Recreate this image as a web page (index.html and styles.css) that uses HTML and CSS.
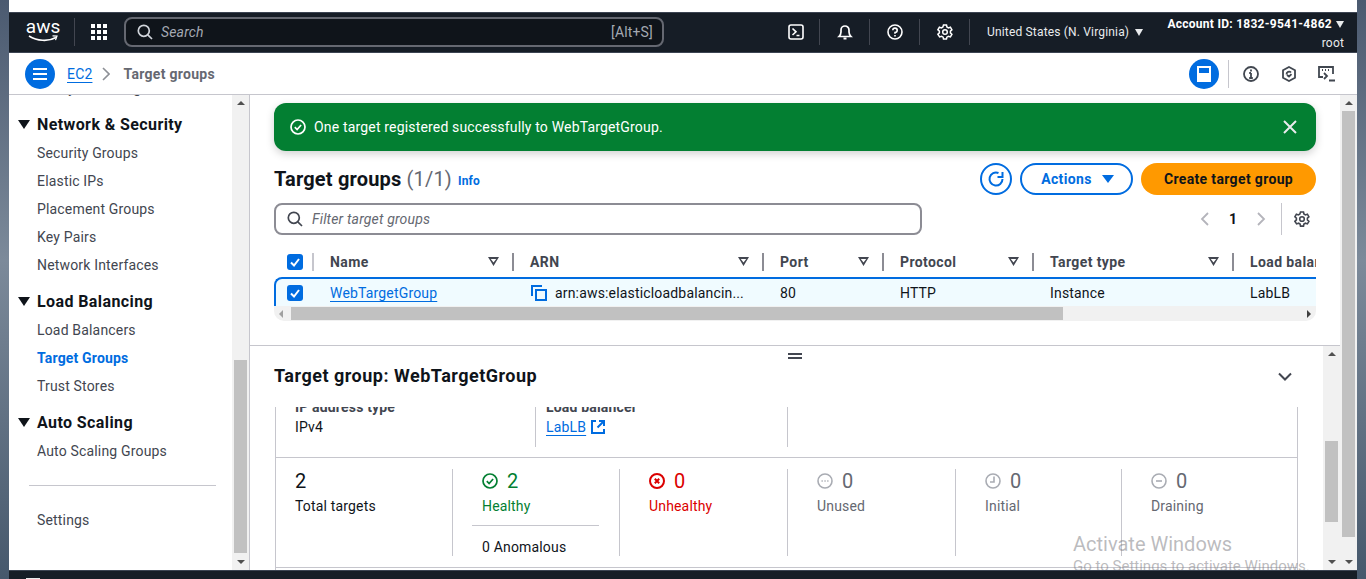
FILE: index.html
```html
<!DOCTYPE html>
<html lang="en">
<head>
    <meta charset="UTF-8">
    <meta name="viewport" content="width=device-width, initial-scale=1.0">
    <title>Target groups | EC2</title>
    <link rel="stylesheet" href="styles.css">
</head>
<body>
<div class="window">
    <div class="top-gap"></div>

    <header class="topnav">
        <div class="aws-logo">
            <span class="aws-word">aws</span>
            <svg class="aws-smile" width="30" height="7" viewBox="0 0 30 7"><path d="M1 1c8 5 19 6 27 1.500" fill="none" stroke="#fff" stroke-width="1.600"/><path d="M24.500 .8l4.500 .3-1.500 4" fill="none" stroke="#fff" stroke-width="1.200"/></svg>
        </div>
        <span class="nav-sep first"></span>
        <svg class="grid-icon" width="16" height="16" viewBox="0 0 16 16" fill="#fff">
            <rect width="4" height="4"/><rect x="6" width="4" height="4"/><rect x="12" width="4" height="4"/>
            <rect y="6" width="4" height="4"/><rect x="6" y="6" width="4" height="4"/><rect x="12" y="6" width="4" height="4"/>
            <rect y="12" width="4" height="4"/><rect x="6" y="12" width="4" height="4"/><rect x="12" y="12" width="4" height="4"/>
        </svg>
        <div class="search">
            <svg width="16" height="16" viewBox="0 0 16 16" fill="none" stroke="#d1d5db" stroke-width="1.700"><circle cx="6.800" cy="6.800" r="5.500"/><path d="M10.800 10.800L15 15"/></svg>
            <span class="search-text">Search</span>
            <span class="search-key">[Alt+S]</span>
        </div>
        <div class="nav-tool first-tool">
            <svg width="16" height="16" viewBox="0 0 16 16" fill="none" stroke="#fff" stroke-width="1.600"><rect x="1" y="1" width="14" height="14" rx="2"/><path d="M4.500 4.500L8 7.800 4.500 11M8.500 11.500h3"/></svg>
        </div>
        <span class="nav-sep"></span>
        <div class="nav-tool">
            <svg width="16" height="16" viewBox="0 0 16 16" fill="none" stroke="#fff" stroke-width="1.700"><path d="M2 12.500h12c-1.500-1.500-2-2.500-2-4.500V6a4 4 0 0 0-8 0v2c0 2-.5 3-2 4.500z"/><path d="M6.500 14.500h3" stroke-width="2"/></svg>
        </div>
        <span class="nav-sep"></span>
        <div class="nav-tool">
            <svg width="16" height="16" viewBox="0 0 16 16" fill="none" stroke="#fff" stroke-width="1.600"><circle cx="8" cy="8" r="7"/><path d="M5.800 6.200A2.200 2.200 0 1 1 8 8.500v1.200"/><path d="M8 11v1.500"/></svg>
        </div>
        <span class="nav-sep"></span>
        <div class="nav-tool">
            <svg width="16" height="16" viewBox="0 0 16 16" fill="none" stroke="#fff" stroke-width="1.500"><circle cx="8" cy="8" r="2.300"/><path d="M6.500 1h3l.4 2 1.500.9 2-.7 1.500 2.600-1.500 1.400v1.700l1.500 1.400-1.500 2.600-2-.7-1.500.9-.4 2h-3l-.4-2-1.500-.9-2 .7L.9 10.300l1.500-1.400V7.200L.9 5.800l1.500-2.600 2 .7 1.500-.9z"/></svg>
        </div>
        <span class="nav-sep"></span>
        <div class="region">United States (N. Virginia)<span class="caret"></span></div>
        <div class="account">
            <div class="account-id">Account ID: 1832-9541-4862<span class="caret"></span></div>
            <div class="account-user">root</div>
        </div>
    </header>

    <div class="crumbbar">
        <button class="round-btn menu-btn">
            <svg width="14" height="14" viewBox="0 0 14 14" stroke="#fff" stroke-width="2"><path d="M0 2h14M0 7h14M0 12h14"/></svg>
        </button>
        <a class="link crumb-link">EC2</a>
        <svg class="crumb-chevron" width="8" height="14" viewBox="0 0 8 14" fill="none" stroke="#8d9096" stroke-width="1.600"><path d="M1 1l6 6-6 6"/></svg>
        <span class="crumb-current">Target groups</span>
        <button class="round-btn panel-btn">
            <svg width="14" height="16" viewBox="0 0 14 16" fill="none" stroke="#fff" stroke-width="2"><rect x="1" y="1" width="12" height="14"/><rect x="1" y="8" width="12" height="7" fill="#fff"/></svg>
        </button>
        <span class="crumb-sep"></span>
        <svg class="tool-info" width="16" height="16" viewBox="0 0 16 16" fill="none" stroke="#414750" stroke-width="1.800"><circle cx="8" cy="8" r="7"/><path d="M8 7v5M8 3.500v2M6.200 7H8M6.200 12h3.600"/></svg>
        <svg class="tool-hex" width="16" height="16" viewBox="0 0 16 16" fill="none" stroke="#414750" stroke-width="1.800"><path d="M8 1l6 3.200v7.600L8 15l-6-3.200V4.200z"/><path d="M5.500 8.500a2.600 2.600 0 0 1 4.500-2M10.500 8.200L8 10.500 6 9"/></svg>
        <svg class="tool-cloud" width="18" height="16" viewBox="0 0 18 16" fill="none" stroke="#414750" stroke-width="1.800"><path d="M5 11H1V1h14v7"/><path d="M4 4h1M7 4h1M10 4h1" stroke-width="2"/><path d="M6 7l3 3-3 3M11 14.500h6"/></svg>
    </div>

    <div class="workspace">
        <aside class="sidenav">
            <div class="sidenav-body">
                <ul class="nav-list">
                    <li class="nav-item clipped-item">Lifecycle Manager</li>
                    <li class="nav-head"><span class="tri"></span>Network &amp; Security</li>
                    <li class="nav-item">Security Groups</li>
                    <li class="nav-item">Elastic IPs</li>
                    <li class="nav-item">Placement Groups</li>
                    <li class="nav-item">Key Pairs</li>
                    <li class="nav-item">Network Interfaces</li>
                    <li class="nav-head"><span class="tri"></span>Load Balancing</li>
                    <li class="nav-item">Load Balancers</li>
                    <li class="nav-item active">Target Groups</li>
                    <li class="nav-item">Trust Stores</li>
                    <li class="nav-head"><span class="tri"></span>Auto Scaling</li>
                    <li class="nav-item">Auto Scaling Groups</li>
                </ul>
                <div class="nav-divider"></div>
                <div class="nav-item">Settings</div>
            </div>
            <div class="vscroll side-scroll">
                <span class="arrow-up"></span>
                <div class="track"><div class="thumb"></div></div>
                <span class="arrow-down"></span>
            </div>
        </aside>

        <main class="main">
            <section class="top-pane">
                <div class="flash">
                    <svg width="16" height="16" viewBox="0 0 16 16" fill="none" stroke="#fff" stroke-width="1.700"><circle cx="8" cy="8" r="7"/><path d="M4.800 8.200l2.300 2.300 4-4.500"/></svg>
                    <span class="flash-text">One target registered successfully to WebTargetGroup.</span>
                    <svg class="flash-close" width="14" height="14" viewBox="0 0 14 14" stroke="#e9ebed" stroke-width="2"><path d="M1 1l12 12M13 1L1 13"/></svg>
                </div>

                <div class="title-row">
                    <h1 class="title">Target groups <span class="count">(1/1)</span></h1>
                    <a class="info">Info</a>
                    <button class="btn-refresh">
                        <svg width="18" height="18" viewBox="0 0 18 18" fill="none" stroke="#006ce0" stroke-width="2"><path d="M15.500 9A6.500 6.500 0 1 1 11.500 3"/><path d="M15.500 2v5h-5"/></svg>
                    </button>
                    <button class="btn btn-normal">Actions<span class="btn-caret"></span></button>
                    <button class="btn btn-primary">Create target group</button>
                </div>

                <div class="filter-row">
                    <div class="filter">
                        <svg width="16" height="16" viewBox="0 0 16 16" fill="none" stroke="#424650" stroke-width="1.700"><circle cx="6.800" cy="6.800" r="5.500"/><path d="M10.800 10.800L15 15"/></svg>
                        <span>Filter target groups</span>
                    </div>
                    <div class="pager">
                        <svg width="10" height="14" viewBox="0 0 10 14" fill="none" stroke="#b4b4bb" stroke-width="1.800"><path d="M8 1L2 7l6 6"/></svg>
                        <span class="page-num">1</span>
                        <svg width="10" height="14" viewBox="0 0 10 14" fill="none" stroke="#b4b4bb" stroke-width="1.800"><path d="M2 1l6 6-6 6"/></svg>
                        <span class="pager-sep"></span>
                        <svg class="pager-gear" width="16" height="16" viewBox="0 0 16 16" fill="none" stroke="#424650" stroke-width="1.600"><circle cx="8" cy="8" r="2.300"/><path d="M6.500 1h3l.4 2 1.500.9 2-.7 1.500 2.600-1.500 1.400v1.700l1.500 1.400-1.500 2.600-2-.7-1.500.9-.4 2h-3l-.4-2-1.500-.9-2 .7L.9 10.300l1.500-1.400V7.200L.9 5.800l1.500-2.600 2 .7 1.500-.9z"/></svg>
                    </div>
                </div>

                <div class="table">
                    <div class="thead">
                        <div class="th check-cell"><span class="checkbox"><svg width="12" height="12" viewBox="0 0 12 12" fill="none" stroke="#fff" stroke-width="2"><path d="M2 6.500l3 3 5-6.500"/></svg></span></div>
                        <div class="th">Name<span class="sort"></span></div>
                        <div class="th">ARN<span class="sort"></span></div>
                        <div class="th">Port<span class="sort"></span></div>
                        <div class="th">Protocol<span class="sort"></span></div>
                        <div class="th">Target type<span class="sort"></span></div>
                        <div class="th">Load balancer</div>
                    </div>
                    <div class="tr">
                        <div class="td check-cell"><span class="checkbox"><svg width="12" height="12" viewBox="0 0 12 12" fill="none" stroke="#fff" stroke-width="2"><path d="M2 6.500l3 3 5-6.500"/></svg></span></div>
                        <div class="td"><a class="link">WebTargetGroup</a></div>
                        <div class="td arn-cell">
                            <svg width="16" height="16" viewBox="0 0 16 16" fill="none" stroke="#006ce0" stroke-width="2"><path d="M1 11V1h10"/><rect x="5" y="5" width="10" height="10"/></svg>
                            <span class="arn-text">arn:aws:elasticloadbalancin...</span>
                        </div>
                        <div class="td">80</div>
                        <div class="td">HTTP</div>
                        <div class="td">Instance</div>
                        <div class="td">LabLB</div>
                    </div>
                    <div class="hscroll">
                        <span class="arrow-left"></span>
                        <div class="hthumb"></div>
                        <span class="arrow-right"></span>
                    </div>
                </div>
            </section>

            <section class="bottom-pane">
                <span class="handle"></span>
                <div class="bottom-body">
                    <div class="detail-head">
                        <h2 class="detail-title">Target group: WebTargetGroup</h2>
                        <svg width="14" height="10" viewBox="0 0 14 10" fill="none" stroke="#424650" stroke-width="2"><path d="M1 1.500l6 6 6-6"/></svg>
                    </div>
                    <div class="detail-box">
                        <div class="attrs">
                            <div class="attr">
                                <div class="attr-label">IP address type</div>
                                <div>IPv4</div>
                            </div>
                            <div class="attr">
                                <div class="attr-label">Load balancer</div>
                                <a class="link lb-link">LabLB
                                    <svg width="14" height="14" viewBox="0 0 14 14" fill="none" stroke="#006ce0" stroke-width="2"><path d="M5 1H1v12h12V9"/><path d="M8 1h5v5M13 1L6.500 7.500"/></svg>
                                </a>
                            </div>
                            <div class="attr"></div>
                        </div>
                        <div class="stats">
                            <div class="stat stat-total">
                                <div class="stat-num"><span>2</span></div>
                                <div class="stat-label">Total targets</div>
                            </div>
                            <div class="stat stat-healthy">
                                <div class="stat-num">
                                    <svg width="16" height="16" viewBox="0 0 16 16" fill="none" stroke="#037f32" stroke-width="1.700"><circle cx="8" cy="8" r="7"/><path d="M4.800 8.200l2.300 2.300 4-4.500"/></svg>
                                    <span>2</span>
                                </div>
                                <div class="stat-label">Healthy</div>
                                <div class="stat-sub">0 Anomalous</div>
                            </div>
                            <div class="stat stat-bad">
                                <div class="stat-num">
                                    <svg width="16" height="16" viewBox="0 0 16 16" fill="none" stroke="#db0000" stroke-width="2"><circle cx="8" cy="8" r="7"/><path d="M5.800 5.800l4.400 4.400M10.200 5.800l-4.400 4.400"/></svg>
                                    <span>0</span>
                                </div>
                                <div class="stat-label">Unhealthy</div>
                            </div>
                            <div class="stat stat-muted">
                                <div class="stat-num">
                                    <svg width="16" height="16" viewBox="0 0 16 16" fill="none" stroke="#a9acb3" stroke-width="1.600"><circle cx="8" cy="8" r="7"/><path d="M4.500 8h1.300M7.400 8h1.300M10.200 8h1.300"/></svg>
                                    <span>0</span>
                                </div>
                                <div class="stat-label">Unused</div>
                            </div>
                            <div class="stat stat-muted">
                                <div class="stat-num">
                                    <svg width="16" height="16" viewBox="0 0 16 16" fill="none" stroke="#a9acb3" stroke-width="1.600"><circle cx="8" cy="8" r="7"/><path d="M9 3.500V9H5"/></svg>
                                    <span>0</span>
                                </div>
                                <div class="stat-label">Initial</div>
                            </div>
                            <div class="stat stat-muted">
                                <div class="stat-num">
                                    <svg width="16" height="16" viewBox="0 0 16 16" fill="none" stroke="#a9acb3" stroke-width="1.600"><circle cx="8" cy="8" r="7"/><path d="M5 8h6"/></svg>
                                    <span>0</span>
                                </div>
                                <div class="stat-label">Draining</div>
                            </div>
                        </div>
                    </div>
                </div>
                <div class="vscroll pane-scroll">
                    <span class="arrow-up"></span>
                    <div class="track"><div class="thumb"></div></div>
                    <span class="arrow-down"></span>
                </div>
                <div class="watermark">
                    <div class="wm-big">Activate Windows</div>
                    <div class="wm-small">Go to Settings to activate Windows.</div>
                </div>
            </section>
        </main>

        <div class="vscroll page-scroll">
            <span class="arrow-up"></span>
            <div class="track"><div class="thumb"></div></div>
            <span class="arrow-down"></span>
        </div>
    </div>

    <footer class="footer"><span class="footer-icon"></span></footer>
</div>
</body>
</html>
```

FILE: styles.css
```css
* {
    box-sizing: border-box;
}

html, body {
    height: 100%;
}

body {
    margin: 0;
    overflow: hidden;
    font-family: 'Roboto', sans-serif;
    font-size: 14px;
    letter-spacing: 0.17px;
    color: #0f141a;
    background: linear-gradient(180deg, #4b5a70 0%, #7c8a9a 45%, #46586c 100%);
}

.window {
    margin: 0 9px 0 9px;
    height: 579px;
    display: flex;
    flex-direction: column;
    background: #fff;
}

.top-gap {
    height: 12px;
    flex: none;
}

button {
    font-family: inherit;
    padding: 0;
    cursor: pointer;
}

svg {
    flex: none;
    display: block;
}

.link {
    color: #006ce0;
    text-decoration: underline;
    text-underline-offset: 3px;
}

/* top navigation */
.topnav {
    height: 41px;
    flex: none;
    display: flex;
    align-items: center;
    padding-bottom: 1px;
    background: #161d26;
    border-top: 1px solid #3c4452;
    border-bottom: 1px solid #3c4452;
    color: #fff;
    font-size: 12px;
}

.aws-logo {
    margin-left: 18px;
    width: 32px;
    height: 28px;
    display: flex;
    flex-direction: column;
    align-items: center;
}

.aws-word {
    font-size: 19px;
    line-height: 18px;
    font-weight: 400;
    letter-spacing: 0;
}

.aws-smile {
    margin-top: -1px;
}

.nav-sep {
    width: 1px;
    height: 26px;
    background: #424650;
    margin: 0 17px 0 16px;
}

.nav-sep.first {
    margin: 0 16px 0 15px;
    height: 28px;
}

.search {
    width: 540px;
    height: 30px;
    margin-left: 17px;
    display: flex;
    align-items: center;
    padding: 0 9px 0 11px;
    background: #0f141a;
    border: 2px solid #656871;
    border-radius: 8px;
    font-size: 14px;
    color: #a4a9b2;
}

.search-text {
    margin-left: 8px;
    font-style: italic;
}

.search-key {
    margin-left: auto;
}

.nav-tool {
    width: 16px;
    height: 16px;
}

.first-tool {
    margin-left: 124px;
    margin-right: -1px;
}

.region {
    display: flex;
    align-items: center;
    color: #e9ebed;
    white-space: nowrap;
}

.caret {
    width: 0;
    height: 0;
    margin-left: 6px;
    border-left: 4.500px solid transparent;
    border-right: 4.500px solid transparent;
    border-top: 7px solid #e9ebed;
}

.account {
    margin-left: auto;
    padding-right: 13px;
    margin-top: 3px;
    text-align: right;
}

.account-id {
    display: flex;
    align-items: center;
    font-weight: 700;
    letter-spacing: 0.27px;
    white-space: nowrap;
}

.account-id .caret {
    margin-left: 4px;
}

.account-user {
    margin-top: 5px;
    line-height: 14px;
    color: #e9ebed;
}

/* breadcrumb bar */
.crumbbar {
    height: 42px;
    flex: none;
    display: flex;
    align-items: center;
    padding-left: 16px;
    border-bottom: 1px solid #c6c6cd;
    background: #fff;
}

.round-btn {
    width: 30px;
    height: 30px;
    border: none;
    border-radius: 50%;
    background: #006ce0;
    display: flex;
    align-items: center;
    justify-content: center;
}

.crumb-link {
    margin-left: 12px;
}

.crumb-chevron {
    margin-left: 10px;
}

.crumb-current {
    margin-left: 13px;
    font-weight: 700;
    letter-spacing: 0.3px;
    color: #656871;
}

.panel-btn {
    margin-left: auto;
}

.crumb-sep {
    width: 1px;
    height: 28px;
    background: #c6c6cd;
    margin-left: 9px;
}

.tool-info {
    margin-left: 14px;
}

.tool-hex {
    margin-left: 22px;
}

.tool-cloud {
    margin-left: 21px;
    margin-right: 21px;
}

/* body of the console */
.workspace {
    flex: 1;
    min-height: 0;
    display: flex;
}

.sidenav {
    width: 241px;
    flex: none;
    display: flex;
    border-right: 1px solid #c6c6cd;
}

.sidenav-body {
    flex: 1;
    overflow: hidden;
    font-size: 14px;
}

.nav-list {
    list-style: none;
    margin: -21px 0 0;
    padding: 0;
}

.nav-item {
    height: 28px;
    line-height: 28px;
    padding-left: 28px;
    color: #424650;
}

.clipped-item {
    margin-bottom: 7px;
}

.nav-item.active {
    color: #006ce0;
    font-weight: 700;
}

.nav-head {
    height: 29px;
    line-height: 29px;
    margin-top: 8px;
    display: flex;
    align-items: center;
    padding-left: 9px;
    font-size: 16px;
    font-weight: 700;
    letter-spacing: 0.4px;
}

.tri {
    width: 0;
    height: 0;
    margin-right: 7px;
    border-left: 6px solid transparent;
    border-right: 6px solid transparent;
    border-top: 9px solid #0f141a;
}

.nav-divider {
    height: 1px;
    margin: 20px 16px 20px 20px;
    background: #c6c6cd;
}

/* fake windows scrollbars */
.vscroll {
    width: 17px;
    flex: none;
    display: flex;
    flex-direction: column;
    align-items: center;
    background: #f1f1f1;
}

.arrow-up, .arrow-down {
    width: 0;
    height: 0;
    flex: none;
    border-left: 4px solid transparent;
    border-right: 4px solid transparent;
}

.arrow-up {
    margin-top: 6px;
    border-bottom: 4px solid #505050;
}

.arrow-down {
    margin-bottom: 6px;
    border-top: 4px solid #505050;
}

.track {
    flex: 1;
    width: 13px;
    min-height: 0;
}

.thumb {
    background: #c1c1c1;
}

.side-scroll .thumb {
    margin-top: 255px;
    height: 193px;
}

.page-scroll .thumb {
    margin-top: 6px;
    height: 426px;
}

.pane-scroll .thumb {
    margin-top: 85px;
    height: 81px;
}

/* main content */
.main {
    flex: 1;
    min-width: 0;
    display: flex;
    flex-direction: column;
}

.top-pane {
    height: 250px;
    flex: none;
    padding: 8px 24px 0 24px;
    overflow: hidden;
}

.flash {
    height: 48px;
    display: flex;
    align-items: center;
    padding: 0 19px 0 16px;
    border-radius: 12px;
    background: #037f32;
    color: #fff;
    box-shadow: 0 3px 8px rgba(0, 0, 0, 0.18);
}

.flash-text {
    margin-left: 8px;
}

.flash-close {
    margin-left: auto;
}

.title-row {
    display: flex;
    align-items: center;
    margin-top: 12px;
    height: 32px;
}

.title {
    margin: 0;
    font-size: 20px;
    font-weight: 700;
    white-space: nowrap;
}

.count {
    font-weight: 400;
    color: #656871;
}

.info {
    margin-left: 6px;
    margin-top: 4px;
    font-size: 12px;
    font-weight: 700;
    color: #006ce0;
}

.btn-refresh {
    margin-left: auto;
    width: 32px;
    height: 32px;
    border: 2px solid #006ce0;
    border-radius: 50%;
    background: #fff;
    display: flex;
    align-items: center;
    justify-content: center;
}

.btn {
    height: 32px;
    border-radius: 16px;
    font-size: 14px;
    font-weight: 700;
    letter-spacing: 0.35px;
    white-space: nowrap;
}

.btn-normal {
    width: 113px;
    margin-left: 8px;
    padding-left: 2px;
    border: 2px solid #006ce0;
    background: #fff;
    color: #006ce0;
    display: flex;
    align-items: center;
    justify-content: center;
}

.btn-caret {
    margin-left: 10px;
    width: 0;
    height: 0;
    border-left: 6px solid transparent;
    border-right: 6px solid transparent;
    border-top: 8px solid #006ce0;
}

.btn-primary {
    width: 175px;
    margin-left: 8px;
    border: none;
    background: #ff9900;
    color: #0f141a;
}

.filter-row {
    display: flex;
    align-items: center;
    margin-top: 8px;
    height: 32px;
}

.filter {
    width: 648px;
    height: 32px;
    display: flex;
    align-items: center;
    padding: 0 11px;
    border: 2px solid #8c8c94;
    border-radius: 8px;
    font-style: italic;
    color: #656871;
}

.filter span {
    margin-left: 9px;
}

.pager {
    margin-left: auto;
    display: flex;
    align-items: center;
    height: 32px;
}

.page-num {
    width: 46px;
    text-align: center;
    font-weight: 700;
    color: #0f141a;
}

.pager-sep {
    width: 1px;
    height: 32px;
    background: #c6c6cd;
    margin-left: 15px;
}

.pager-gear {
    margin-left: 12px;
    margin-right: 6px;
}

/* table */
.table {
    margin-top: 10px;
    overflow: hidden;
}

.thead, .tr {
    display: grid;
}

.thead {
    height: 33px;
    grid-template-columns: 40px 200px 250px 120px 150px 200px 82px;
}

.th {
    position: relative;
    display: flex;
    align-items: center;
    padding-left: 16px;
    font-weight: 700;
    letter-spacing: 0.4px;
    color: #424650;
    white-space: nowrap;
}

.th:nth-child(n+2)::before {
    content: "";
    position: absolute;
    left: -2px;
    top: 8px;
    bottom: 7px;
    width: 2px;
    background: #8c8c94;
}

.th:nth-child(2)::before {
    background: #c6c6cd;
}

.check-cell {
    padding-left: 13px;
}

.checkbox {
    width: 16px;
    height: 16px;
    border-radius: 3px;
    background: #006ce0;
    display: flex;
    align-items: center;
    justify-content: center;
}

.sort {
    margin-left: auto;
    margin-right: 15px;
    width: 11px;
    height: 9px;
    background: #424650;
    clip-path: polygon(0 0, 100% 0, 50% 100%, 0 0, 25% 22%, 50% 62%, 75% 22%, 25% 22%);
}

.tr {
    height: 29px;
    grid-template-columns: 38px 200px 250px 120px 150px 200px 82px;
    background: #f0fbff;
    border-top: 2px solid #006ce0;
    border-left: 2px solid #006ce0;
    border-top-left-radius: 8px;
    margin-top: -1px;
}

.td {
    display: flex;
    align-items: center;
    padding-left: 16px;
    white-space: nowrap;
    overflow: hidden;
}

.tr .check-cell {
    padding-left: 11px;
}

.arn-cell {
    padding-left: 17px;
}

.arn-text {
    margin-left: 8px;
}

.hscroll {
    height: 15px;
    display: flex;
    align-items: center;
    background: #f1f1f1;
    border-radius: 0 0 10px 10px;
    padding: 0 5px;
}

.arrow-left, .arrow-right {
    width: 0;
    height: 0;
    flex: none;
    border-top: 4px solid transparent;
    border-bottom: 4px solid transparent;
}

.arrow-left {
    border-right: 4px solid #a0a0a0;
}

.arrow-right {
    margin-left: auto;
    border-left: 4px solid #404040;
}

.hthumb {
    margin-left: 8px;
    width: 772px;
    height: 13px;
    background: #c1c1c1;
}

/* split panel */
.bottom-pane {
    position: relative;
    flex: 1;
    min-height: 0;
    display: flex;
    border-top: 1px solid #c6c6cd;
    overflow: hidden;
}

.handle {
    position: absolute;
    left: 538px;
    top: 7px;
    width: 14px;
    height: 6px;
    border-top: 2px solid #424650;
    border-bottom: 2px solid #424650;
}

.bottom-body {
    flex: 1;
    min-width: 0;
    overflow: hidden;
}

.detail-head {
    height: 61px;
    padding: 0 31px 0 24px;
    display: flex;
    align-items: center;
    justify-content: space-between;
}

.detail-title {
    margin: 0;
    font-size: 18px;
    font-weight: 700;
    letter-spacing: 0.5px;
    position: relative;
    top: -1px;
}

.detail-box {
    margin: 0 25px 0 25px;
    height: 170px;
    border-left: 1px solid #c6c6cd;
    border-right: 1px solid #c6c6cd;
}

.attrs {
    height: 51px;
    display: grid;
    grid-template-columns: 260px 252px 1fr;
    border-bottom: 1px solid #c6c6cd;
    overflow: hidden;
}

.attr {
    height: 40px;
    padding-left: 10px;
    border-right: 1px solid #c6c6cd;
}

.attr:first-child {
    padding-left: 19px;
}

.attr:last-child {
    border-right: none;
}

.attr-label {
    height: 10px;
    margin-bottom: 2px;
    line-height: 0;
    font-weight: 700;
    color: #424650;
}

.lb-link {
    display: inline-flex;
    align-items: center;
    gap: 5px;
}

.stats {
    height: 110px;
    display: grid;
    grid-template-columns: 177px 167px 168px 168px 166px 1fr;
    align-items: start;
    padding-top: 11px;
    border-bottom: 1px solid #c6c6cd;
}

.stat {
    height: 87px;
    padding-left: 29px;
    border-right: 1px solid #c6c6cd;
}

.stat:last-child {
    border-right: none;
}

.stat-total {
    padding-left: 19px;
}

.stat-num {
    height: 24px;
    display: flex;
    align-items: center;
    gap: 9px;
    font-size: 20px;
}

.stat-label {
    margin-top: 3px;
    line-height: 20px;
}

.stat-healthy {
    color: #037f32;
}

.stat-bad {
    color: #db0000;
}

.stat-muted {
    color: #656871;
}

.stat-sub {
    margin: 9px 0 0 -10px;
    padding: 11px 0 0 10px;
    width: 127px;
    border-top: 1px solid #c6c6cd;
    color: #0f141a;
    line-height: 20px;
    white-space: nowrap;
}

.watermark {
    position: absolute;
    left: 823px;
    top: 185px;
    color: rgba(120, 120, 125, 0.5);
    letter-spacing: 0;
    white-space: nowrap;
    pointer-events: none;
}

.wm-big {
    font-size: 20px;
    line-height: 26px;
}

.wm-small {
    font-size: 15px;
    line-height: 18px;
}

.footer {
    height: 9px;
    flex: none;
    position: relative;
    background: #161d26;
    border-top: 1px solid #3c4452;
}

.footer-icon {
    position: absolute;
    left: 17px;
    top: 7px;
    width: 14px;
    height: 2px;
    background: #e9ebed;
}
```
